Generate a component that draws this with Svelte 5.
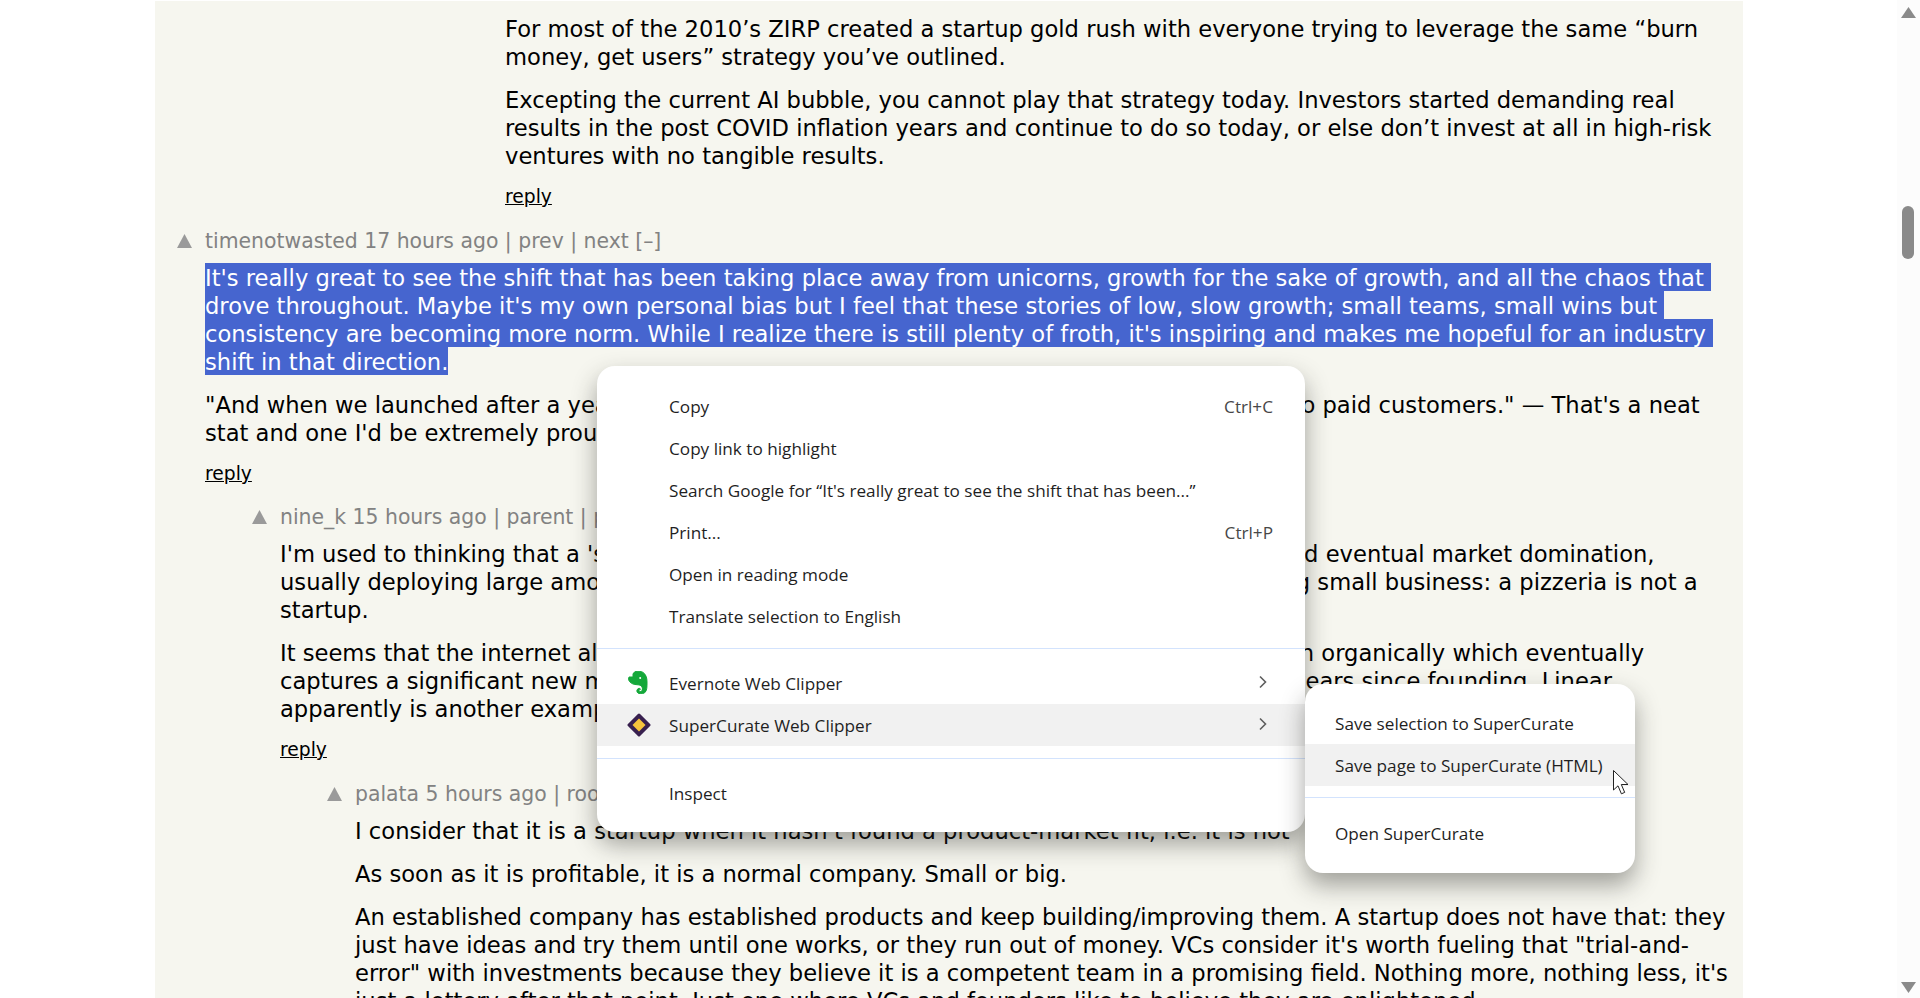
<script lang="ts">
  interface Para { lines: string[]; selected?: boolean }
  interface Comment { depth: number; meta?: string; paras: Para[]; reply?: boolean }

  const comments: Comment[] = [
    {
      depth: 4,
      paras: [
        { lines: ['For most of the 2010’s ZIRP created a startup gold rush with everyone trying to leverage the same “burn', 'money, get users” strategy you’ve outlined.'] },
        { lines: ['Excepting the current AI bubble, you cannot play that strategy today. Investors started demanding real', 'results in the post COVID inflation years and continue to do so today, or else don’t invest at all in high-risk', 'ventures with no tangible results.'] },
      ],
      reply: true,
    },
    {
      depth: 0,
      meta: 'timenotwasted 17 hours ago | prev | next [–]',
      paras: [
        {
          selected: true,
          lines: [
            "It's really great to see the shift that has been taking place away from unicorns, growth for the sake of growth, and all the chaos that ",
            "drove throughout. Maybe it's my own personal bias but I feel that these stories of low, slow growth; small teams, small wins but ",
            "consistency are becoming more norm. While I realize there is still plenty of froth, it's inspiring and makes me hopeful for an industry ",
            'shift in that direction.',
          ],
        },
        { lines: ['"And when we launched after a year of bootstrapping, we had grown the product from nothing, to paid customers." — That\'s a neat', "stat and one I'd be extremely proud of."] },
      ],
      reply: true,
    },
    {
      depth: 1,
      meta: 'nine_k 15 hours ago | parent | prev | next [–]',
      paras: [
        { lines: ["I'm used to thinking that a 'startup' is a newer business that pursues very rapid growth and eventual market domination,", 'usually deploying large amounts of investment, as opposed to operating a regular growing small business: a pizzeria is not a', 'startup.'] },
        { lines: ['It seems that the internet all but erased, the dividing line for a big business that has grown organically which eventually', 'captures a significant new market share only after a rather large and growing number of years since founding. Linear', 'apparently is another example.'] },
      ],
      reply: true,
    },
    {
      depth: 2,
      meta: 'palata 5 hours ago | root | parent | next [–]',
      paras: [
        { lines: ["I consider that it is a startup when it hasn't found a product-market fit, i.e. it is not"] },
        { lines: ['As soon as it is profitable, it is a normal company. Small or big.'] },
        {
          lines: [
            'An established company has established products and keep building/improving them. A startup does not have that: they',
            'just have ideas and try them until one works, or they run out of money. VCs consider it\'s worth fueling that "trial-and-',
            'error" with investments because they believe it is a competent team in a promising field. Nothing more, nothing less, it\'s',
            'just a lottery after that point. Just one where VCs and founders like to believe they are enlightened.',
          ],
        },
      ],
    },
  ];

  const mainGroup = [
    { label: 'Copy', shortcut: 'Ctrl+C' },
    { label: 'Copy link to highlight' },
    { label: 'Search Google for “It\'s really great to see the shift that has been...”' },
    { label: 'Print...', shortcut: 'Ctrl+P' },
    { label: 'Open in reading mode' },
    { label: 'Translate selection to English' },
  ];
</script>

<div class="page">
  <main class="thread">
    {#each comments as c}
      <section class="comment" style="margin-left: {c.depth * 75}px">
        {#if c.meta}
          <div class="meta">
            <span class="vote"></span>
            {c.meta}
          </div>
        {/if}
        {#each c.paras as p}
          <p class="para" class:selected={p.selected}>
            {#each p.lines as line}
              <span class="line">{line}</span>
            {/each}
          </p>
        {/each}
        {#if c.reply}
          <a class="reply" href="#reply">reply</a>
        {/if}
      </section>
    {/each}
  </main>

  <aside class="scrollbar">
    <span class="arrow up"></span>
    <span class="thumb"></span>
    <span class="arrow down"></span>
  </aside>

  <div class="menu main-menu" role="menu">
    {#each mainGroup as item}
      <div class="item" role="menuitem">
        <span>{item.label}</span>
        {#if item.shortcut}<span class="shortcut">{item.shortcut}</span>{/if}
      </div>
    {/each}
    <hr class="sep" />
    <div class="item" role="menuitem">
      <svg class="ext-icon evernote" viewBox="0 0 20 23" width="20" height="23">
        <path fill="#14a83a" stroke="#14a83a" stroke-width="1" stroke-linejoin="round" d="M5 2.600 7.200.6C9.500-.2 13 0 15 1.400c3 2 4 5.400 4 9.600 0 4.400.2 8.800-2.400 10.800-2.400 1.500-6.200 1.400-7.400-.6-1-1.900.3-4 2.400-3.900l1 1c-1.500 0-2 1.400-1.100 2 1.500.7 3.100-.4 3-2.400 0-3-2.500-4.200-5.500-4.200-4 0-7-1.600-8.600-5.100l.6-2.600h4z" />
        <circle cx="12.200" cy="7" r="1" fill="#fff" />
      </svg>
      <span>Evernote Web Clipper</span>
      <svg class="chevron" viewBox="0 0 10 14" width="10" height="14"><path d="M2 1.500 7.500 7 2 12.500" /></svg>
    </div>
    <div class="item hover" role="menuitem">
      <svg class="ext-icon" viewBox="0 0 24 24" width="24" height="24">
        <path fill="#38204f" stroke="#38204f" stroke-width="3" stroke-linejoin="round" d="M12 2 22 12 12 22 2 12z" />
        <path fill="#f6c33d" d="M12 5.500 18.500 12 12 18.500 5.500 12z" />
      </svg>
      <span>SuperCurate Web Clipper</span>
      <svg class="chevron" viewBox="0 0 10 14" width="10" height="14"><path d="M2 1.500 7.500 7 2 12.500" /></svg>
    </div>
    <hr class="sep second" />
    <div class="item" role="menuitem"><span>Inspect</span></div>
  </div>

  <div class="menu sub-menu" role="menu">
    <div class="item" role="menuitem"><span>Save selection to SuperCurate</span></div>
    <div class="item hover" role="menuitem"><span>Save page to SuperCurate (HTML)</span></div>
    <hr class="sep" />
    <div class="item" role="menuitem"><span>Open SuperCurate</span></div>
  </div>

  <svg class="cursor" viewBox="0 0 18 26" width="18" height="26">
    <path fill="#fff" stroke="#222" stroke-width="1" stroke-linejoin="round" d="M.5.5V20l4.500-4.200 3.400 8 3.300-1.400-3.400-7.900h6.700z" />
  </svg>
</div>

<style>
  :global(body) {
    background: #fff;
  }

  .page {
    position: relative;
    display: flex;
    height: 998px;
    overflow: hidden;
    font-family: "DejaVu Sans", Verdana, sans-serif;
  }

  .thread {
    flex: none;
    box-sizing: border-box;
    width: 1588px;
    height: 997px;
    margin: 1px 0 0 155px;
    padding: 14px 0 0 50px;
    background: #f6f6ef;
    overflow: hidden;
    font-size: 22.64px;
    line-height: 28px;
    color: #000;
  }

  .comment {
    margin-bottom: 16px;
  }

  .comment:nth-child(2) {
    margin-bottom: 15px;
  }

  .meta {
    position: relative;
    height: 28px;
    margin-bottom: 8px;
    font-size: 20.4px;
    color: #828282;
    white-space: nowrap;
  }

  .comment:nth-child(n + 3) .meta {
    margin-bottom: 9px;
  }

  .vote {
    position: absolute;
    left: -28px;
    top: 7px;
    width: 15px;
    height: 14px;
    background: #9a9a9a;
    clip-path: polygon(50% 0, 100% 100%, 0 100%);
  }

  .para {
    margin: 0 0 15px;
  }

  .para.selected {
    margin-bottom: 16px;
  }

  .line {
    display: block;
    width: fit-content;
    white-space: pre;
  }

  .selected .line {
    box-sizing: border-box;
    height: 28px;
    padding-top: 1px;
    background: #4665cf;
    color: #fff;
  }

  .reply {
    display: block;
    margin-top: -2px;
    color: #000;
    text-decoration: underline;
    font-size: 18.7px;
  }

  .scrollbar {
    position: absolute;
    top: 0;
    right: 0;
    bottom: 0;
    width: 23px;
    background: #fcfcfc;
  }

  .arrow {
    position: absolute;
    left: 4px;
    width: 15px;
    height: 11px;
    background: #8a8a8a;
  }

  .arrow.up {
    top: 7px;
    clip-path: polygon(50% 0, 100% 100%, 0 100%);
  }

  .arrow.down {
    bottom: 5px;
    clip-path: polygon(0 0, 100% 0, 50% 100%);
  }

  .thumb {
    position: absolute;
    top: 206px;
    left: 5px;
    width: 12px;
    height: 53px;
    border-radius: 6px;
    background: #8a8a8a;
  }

  .menu {
    position: absolute;
    box-sizing: border-box;
    background: #fff;
    border-radius: 18px;
    font-family: "Open Sans", "Noto Sans", sans-serif;
    font-size: 17.17px;
    color: #1f1f1f;
    white-space: nowrap;
    box-shadow: 0 12px 24px rgba(40, 40, 36, 0.42);
  }

  .main-menu {
    left: 597px;
    top: 366px;
    width: 708px;
    height: 466px;
    padding: 19px 0 17px;
  }

  .sub-menu {
    left: 1305px;
    top: 684px;
    width: 330px;
    height: 189px;
    padding: 18px 0;
  }

  .item {
    position: relative;
    display: flex;
    align-items: center;
    height: 42px;
    padding: 0 32px 0 72px;
  }

  .sub-menu .item {
    padding-left: 30px;
    padding-right: 0;
  }

  .item.hover {
    background: #f1f1f1;
  }

  .shortcut {
    margin-left: auto;
    color: #474747;
  }

  .sep {
    height: 1px;
    margin: 11px 0 13px;
    border: 0;
    background: #d3e3fd;
  }

  .sep.second {
    margin: 12px 0 13px;
  }

  .sub-menu .sep {
    margin: 11px 0 14px;
  }

  .ext-icon {
    position: absolute;
    left: 30px;
    top: 9px;
  }

  .evernote {
    left: 31px;
  }

  .chevron {
    position: absolute;
    right: 37px;
    top: 13px;
    fill: none;
    stroke: #5e5e5e;
    stroke-width: 1.6;
  }

  .cursor {
    position: absolute;
    left: 1613px;
    top: 770px;
  }
</style>
